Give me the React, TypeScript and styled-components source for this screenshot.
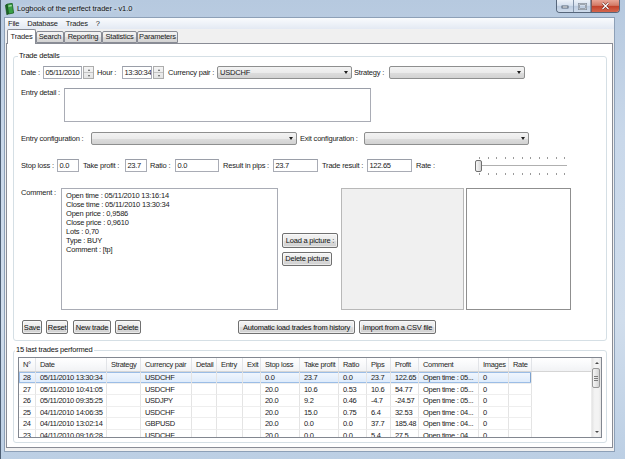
import React from "react";
import styled, { createGlobalStyle } from "styled-components";

const GlobalStyle = createGlobalStyle`
  html, body {
    margin: 0;
    padding: 0;
    width: 625px;
    height: 459px;
    overflow: hidden;
    background: #c6d6e9;
  }
  body {
    font-family: "Liberation Sans", Arial, sans-serif;
    font-size: 7.5px;
    letter-spacing: -0.2px;
    color: #1a1a1a;
  }
  * {
    box-sizing: border-box;
  }
`;

// Window chrome
const Window = styled.div`
  width: 625px;
  height: 459px;
  display: flex;
  flex-direction: column;
  border-left: 1px solid #4e5f74;
  background: linear-gradient(180deg, #b6c9df 0%, #c9d8ea 30%, #d0ddec 70%, #bccfe4 100%);
`;

const TitleBar = styled.div`
  height: 17px;
  flex: none;
  display: flex;
  align-items: flex-start;
  padding: 0 5px 0 3px;
`;

const AppIcon = styled.svg`
  margin-top: 3px;
  flex: none;
`;

const Title = styled.div`
  margin: 4px 0 0 2px;
  line-height: 9px;
  letter-spacing: -0.05px;
  color: #111;
  text-shadow: 0 0 4px rgba(255, 255, 255, 0.9);
`;

const Captions = styled.div`
  margin-left: auto;
  height: 13px;
  display: flex;
  border: 1px solid #56667b;
  border-top: none;
  border-radius: 0 0 4px 4px;
  overflow: hidden;
`;

const CaptionButton = styled.div<{ $w: number; $close?: boolean }>`
  width: ${(p) => p.$w}px;
  display: flex;
  align-items: center;
  justify-content: center;
  border-left: ${(p) => (p.$close ? "1px solid #7a5a5a" : "none")};
  border-right: ${(p) => (p.$close ? "none" : "1px solid #8394aa")};
  background: ${(p) =>
    p.$close
      ? "linear-gradient(180deg, #e8a697 0%, #d37a66 45%, #c2412a 52%, #d4664d 100%)"
      : "linear-gradient(180deg, #edf2f9 0%, #d5e0ee 45%, #bccbdf 52%, #cfdcec 100%)"};
`;

const Client = styled.div`
  flex: 1;
  min-height: 0;
  margin: 0 10px 7px 3px;
  border: 1px solid #8da0b7;
  background: #f0f0f0;
  display: flex;
  flex-direction: column;
`;

// Menu
const MenuBar = styled.div`
  height: 11px;
  flex: none;
  display: flex;
  align-items: center;
  background: linear-gradient(180deg, #f9fbfd 0%, #eef2f8 50%, #e3e9f3 100%);
`;

const MenuItem = styled.span`
  padding: 0 4px;
  line-height: 11px;
  &:first-child {
    margin-left: -1px;
  }
`;

// Tabs
const TabBar = styled.div`
  height: 14px;
  flex: none;
  display: flex;
  align-items: flex-end;
  padding-left: 2px;
  position: relative;
  z-index: 2;
`;

const Tab = styled.div<{ $w: number; $active?: boolean }>`
  width: ${(p) => p.$w}px;
  height: ${(p) => (p.$active ? 15 : 12)}px;
  margin-bottom: ${(p) => (p.$active ? -1 : 0)}px;
  border: 1px solid #898c95;
  border-bottom: ${(p) => (p.$active ? "none" : "1px solid #898c95")};
  border-radius: 2px 2px 0 0;
  background: ${(p) =>
    p.$active ? "#ffffff" : "linear-gradient(180deg, #f3f3f3 0%, #ebebeb 50%, #dedede 52%, #d3d3d3 100%)"};
  text-align: center;
  line-height: ${(p) => (p.$active ? 13 : 10)}px;
  white-space: nowrap;
`;

const TabPane = styled.div`
  flex: 1;
  min-height: 0;
  margin: 0 1px 3px 1px;
  border: 1px solid #898c95;
  background: #ffffff;
  padding: 7px 5px 0 6px;
  display: flex;
  flex-direction: column;
`;

// Group boxes
const Group = styled.fieldset<{ $mt?: number }>`
  margin: ${(p) => p.$mt ?? 0}px 0 0 0;
  padding: 0;
  border: 1px solid #d5dfe5;
  border-radius: 3px;
  min-width: 0;
`;

const Legend = styled.legend<{ $ml: number }>`
  margin-left: ${(p) => p.$ml}px;
  padding: 0 1px;
  height: 10px;
  line-height: 10px;
  color: #111;
`;

const GroupBody = styled.div<{ $pad: string }>`
  display: flex;
  flex-direction: column;
  padding: ${(p) => p.$pad};
`;

const Row = styled.div<{ $h: number; $mt: number; $align?: string }>`
  flex: none;
  display: flex;
  align-items: ${(p) => p.$align ?? "center"};
  height: ${(p) => p.$h}px;
  margin-top: ${(p) => p.$mt}px;
`;

const Label = styled.span<{ $w: number; $ml?: number }>`
  flex: none;
  width: ${(p) => p.$w}px;
  margin-left: ${(p) => p.$ml ?? 0}px;
  line-height: 10px;
  white-space: nowrap;
`;

// Inputs
const TextField = styled.div<{ $w: number; $h?: number }>`
  flex: none;
  width: ${(p) => p.$w}px;
  height: ${(p) => p.$h ?? 13}px;
  border: 1px solid #a9acb5;
  border-top-color: #9a9ea8;
  background: #ffffff;
  padding-left: 1.5px;
  line-height: 11px;
  letter-spacing: -0.3px;
  white-space: nowrap;
  overflow: hidden;
`;

const SpinBox = styled.div`
  flex: none;
  display: flex;
  height: 13px;
  gap: 1px;
`;

const Spinner = styled.div`
  width: 11px;
  height: 13px;
  border: 1px solid #acacac;
  display: flex;
  flex-direction: column;
  background: linear-gradient(180deg, #f5f5f5 0%, #e4e4e4 100%);
`;

const SpinHalf = styled.div<{ $down?: boolean }>`
  flex: 1;
  display: flex;
  align-items: center;
  justify-content: center;
  border-top: ${(p) => (p.$down ? "1px solid #c4c4c4" : "none")};
`;

const Triangle = styled.span<{ $down?: boolean; $size?: number; $color?: string }>`
  width: 0;
  height: 0;
  border-left: ${(p) => p.$size ?? 2}px solid transparent;
  border-right: ${(p) => p.$size ?? 2}px solid transparent;
  ${(p) =>
    p.$down
      ? `border-top: ${(p.$size ?? 2) + 0.5}px solid ${p.$color ?? "#5a5a5a"};`
      : `border-bottom: ${(p.$size ?? 2) + 0.5}px solid ${p.$color ?? "#5a5a5a"};`}
`;

const Combo = styled.div<{ $w: number; $ml?: number }>`
  flex: none;
  width: ${(p) => p.$w}px;
  height: 13px;
  border: 1px solid #8e8f8f;
  border-radius: 2px;
  background: linear-gradient(180deg, #f3f3f3 0%, #ebebeb 50%, #dddddd 52%, #d2d2d2 100%);
  display: flex;
  align-items: center;
  justify-content: space-between;
  padding: 0 3px 0 2px;
  line-height: 11px;
`;

// Slider
const Slider = styled.div`
  flex: none;
  width: 92px;
  height: 19px;
  margin: -3px 0;
  display: flex;
  flex-direction: column;
`;

const Ticks = styled.div<{ $mt: number }>`
  height: 2px;
  margin-top: ${(p) => p.$mt}px;
  display: flex;
  justify-content: space-between;
  padding: 0 2px 0 4px;
`;

const Tick = styled.span`
  width: 1px;
  height: 2px;
  background: #9a9a9a;
`;

const Track = styled.div`
  height: 12px;
  margin-top: 1px;
  display: flex;
  align-items: center;
  background: linear-gradient(
    180deg,
    transparent 5px,
    #b0b0b0 5px,
    #b0b0b0 6px,
    #ffffff 6px,
    #ffffff 7px,
    transparent 7px
  );
`;

const Handle = styled.div`
  width: 7px;
  height: 12px;
  border: 1px solid #707070;
  border-radius: 2px;
  background: linear-gradient(90deg, #f6f6f6 0%, #e6e6e6 50%, #d4d4d4 100%);
`;

// Comment and pictures
const CommentBox = styled.div`
  flex: none;
  width: 217px;
  height: 122px;
  border: 1px solid #a9acb5;
  background: #ffffff;
  padding: 2px 4px;
  line-height: 9px;
  white-space: pre;
`;

const PictureButtons = styled.div`
  flex: none;
  width: 59px;
  height: 122px;
  margin-left: 4px;
  display: flex;
  flex-direction: column;
  justify-content: center;
  align-items: flex-start;
  gap: 4px;
`;

const ImageBox = styled.div<{ $w: number; $ml?: number; $white?: boolean }>`
  flex: none;
  width: ${(p) => p.$w}px;
  height: 122px;
  margin-left: ${(p) => p.$ml ?? 0}px;
  border: 1px solid ${(p) => (p.$white ? "#8f8f8f" : "#b8b8b8")};
  background: ${(p) => (p.$white ? "#ffffff" : "#f0f0f0")};
`;

const Button = styled.button<{ $w: number; $h?: number; $ml?: number }>`
  flex: none;
  width: ${(p) => p.$w}px;
  height: ${(p) => p.$h ?? 14}px;
  margin: 0 0 0 ${(p) => p.$ml ?? 0}px;
  padding: 0;
  border: 1px solid #707070;
  border-radius: 2px;
  background: linear-gradient(180deg, #f3f3f3 0%, #ebebeb 50%, #dddddd 52%, #cfcfcf 100%);
  box-shadow: inset 0 0 0 1px rgba(255, 255, 255, 0.55);
  font: inherit;
  letter-spacing: inherit;
  color: #111;
  line-height: 11px;
  white-space: nowrap;
  display: flex;
  align-items: center;
  justify-content: center;
`;

// Table
const COLS = "17px 71px 34px 51px 25px 26px 18px 39px 39px 28px 24px 28px 60px 30px 23px 1fr";

const TableFrame = styled.div`
  flex: none;
  width: 584px;
  height: 81px;
  border: 1px solid #828790;
  background: #ffffff;
  display: flex;
  letter-spacing: -0.3px;
`;

const TableArea = styled.div`
  flex: 1;
  min-width: 0;
  overflow: hidden;
`;

const HeaderRow = styled.div`
  display: grid;
  grid-template-columns: ${COLS};
  height: 14px;
  border-bottom: 1px solid #d5d5d5;
  background: linear-gradient(180deg, #ffffff 0%, #f7f8fa 60%, #f1f2f4 100%);
`;

const HeaderCell = styled.div<{ $filler?: boolean }>`
  padding-left: 4px;
  line-height: 13px;
  white-space: nowrap;
  overflow: hidden;
  color: #262626;
  border-right: ${(p) => (p.$filler ? "none" : "1px solid #e2e4e8")};
`;

const DataRow = styled.div`
  display: grid;
  grid-template-columns: ${COLS};
  height: 11.6px;
`;

const Cell = styled.div<{ $sel?: boolean; $first?: boolean; $last?: boolean; $filler?: boolean }>`
  padding-left: 4px;
  line-height: 11px;
  white-space: nowrap;
  overflow: hidden;
  border-right: ${(p) => (p.$filler ? "none" : "1px solid #e4e4e4")};
  border-bottom: ${(p) => (p.$filler ? "none" : "1px solid #eeeeee")};
  background: ${(p) => (p.$sel ? "linear-gradient(180deg, #f2f7fe 0%, #dceafb 100%)" : "transparent")};
  box-shadow: ${(p) =>
    p.$sel
      ? `inset 0 1px #9bbde6, inset 0 -1px #9bbde6${p.$first ? ", inset 1px 0 #9bbde6" : ""}${
          p.$last ? ", inset -1px 0 #7da2ce" : ""
        }`
      : "none"};
`;

const ScrollBar = styled.div`
  flex: none;
  width: 10px;
  display: flex;
  flex-direction: column;
  border-left: 1px solid #ececec;
  background: linear-gradient(90deg, #e4e4e4 0%, #f3f3f3 30%, #f3f3f3 70%, #e6e6e6 100%);
`;

const ScrollButton = styled.div`
  height: 10px;
  flex: none;
  display: flex;
  align-items: center;
  justify-content: center;
`;

const Thumb = styled.div`
  height: 20px;
  flex: none;
  margin: 0 1px 0 0;
  border: 1px solid #989898;
  border-radius: 2px;
  background: linear-gradient(90deg, #f4f4f4 0%, #e6e6e6 50%, #d3d3d3 100%);
  display: flex;
  flex-direction: column;
  align-items: center;
  justify-content: center;
  gap: 1px;
`;

const Grip = styled.span`
  width: 4px;
  height: 1px;
  background: #7c7c7c;
`;

const ScrollSpace = styled.div`
  flex: 1;
`;

const tabs = [
  { label: "Trades", w: 29, active: true },
  { label: "Search", w: 28 },
  { label: "Reporting", w: 38 },
  { label: "Statistics", w: 35 },
  { label: "Parameters", w: 41 },
];

const headers = [
  "N°",
  "Date",
  "Strategy",
  "Currency pair",
  "Detail",
  "Entry",
  "Exit",
  "Stop loss",
  "Take profit",
  "Ratio",
  "Pips",
  "Profit",
  "Comment",
  "Images",
  "Rate",
];

const trades = [
  ["28", "05/11/2010 13:30:34", "", "USDCHF", "", "", "", "0.0", "23.7", "0.0", "23.7", "122.65", "Open time : 05...", "0", ""],
  ["27", "05/11/2010 10:41:05", "", "USDCHF", "", "", "", "20.0", "10.6", "0.53", "10.6", "54.77", "Open time : 05...", "0", ""],
  ["26", "05/11/2010 09:35:25", "", "USDJPY", "", "", "", "20.0", "9.2", "0.46", "-4.7", "-24.57", "Open time : 05...", "0", ""],
  ["25", "04/11/2010 14:06:35", "", "USDCHF", "", "", "", "20.0", "15.0", "0.75", "6.4", "32.53", "Open time : 04...", "0", ""],
  ["24", "04/11/2010 13:02:14", "", "GBPUSD", "", "", "", "20.0", "0.0", "0.0", "37.7", "185.48", "Open time : 04...", "0", ""],
  ["23", "04/11/2010 09:16:28", "", "USDCHF", "", "", "", "20.0", "0.0", "0.0", "5.4", "27.5", "Open time : 04...", "0", ""],
];

const comment = `Open time : 05/11/2010 13:16:14
Close time : 05/11/2010 13:30:34
Open price : 0,9586
Close price : 0,9610
Lots : 0,70
Type : BUY
Comment : [tp]`;

const SpinButtons = () => (
  <Spinner>
    <SpinHalf>
      <Triangle $size={1.5} />
    </SpinHalf>
    <SpinHalf $down>
      <Triangle $down $size={1.5} />
    </SpinHalf>
  </Spinner>
);

const ComboArrow = () => <Triangle $down $size={2.5} $color="#1e1e1e" />;

export default function App() {
  return (
    <>
      <GlobalStyle />
      <Window>
        <TitleBar>
          <AppIcon width="11" height="12" viewBox="0 0 11 12">
            <path d="M3 1.2 L8.2 0.3 L9.6 10 L4.4 11 Z" fill="#3aa046" stroke="#185e20" strokeWidth="0.8" />
            <path d="M1.4 2.2 L3 1.2 L4.4 11 L2.8 11.8 Z" fill="#1e6b27" stroke="#134a19" strokeWidth="0.6" />
            <path d="M4.3 2.6 L7.6 2 L7.8 3.2 L4.5 3.8 Z" fill="#b9e3b8" />
          </AppIcon>
          <Title>Logbook of the perfect trader - v1.0</Title>
          <Captions>
            <CaptionButton $w={17}>
              <svg width="8" height="6" viewBox="0 0 8 6">
                <rect x="1" y="3" width="6" height="2" fill="#fff" stroke="#3b4a5e" strokeWidth="0.8" />
              </svg>
            </CaptionButton>
            <CaptionButton $w={17}>
              <svg width="9" height="7" viewBox="0 0 9 7">
                <rect x="1" y="1" width="7" height="5" fill="none" stroke="#3b4a5e" strokeWidth="1.6" />
                <rect x="1" y="1" width="7" height="5" fill="none" stroke="#fff" strokeWidth="0.8" />
              </svg>
            </CaptionButton>
            <CaptionButton $w={28} $close>
              <svg width="9" height="8" viewBox="0 0 9 8">
                <path d="M1.5 1 L7.5 7 M7.5 1 L1.5 7" stroke="#5a1a12" strokeWidth="2.4" />
                <path d="M1.5 1 L7.5 7 M7.5 1 L1.5 7" stroke="#fff" strokeWidth="1.3" />
              </svg>
            </CaptionButton>
          </Captions>
        </TitleBar>

        <Client>
          <MenuBar>
            {["File", "Database", "Trades", "?"].map((m) => (
              <MenuItem key={m}>{m}</MenuItem>
            ))}
          </MenuBar>

          <TabBar>
            {tabs.map((t) => (
              <Tab key={t.label} $w={t.w} $active={t.active}>
                {t.label}
              </Tab>
            ))}
          </TabBar>

          <TabPane>
            <Group>
              <Legend $ml={4}>Trade details</Legend>
              <GroupBody $pad="0 0 6px 7px">
                <Row $h={13} $mt={5}>
                  <Label $w={22}>Date :</Label>
                  <SpinBox>
                    <TextField $w={39}>05/11/2010</TextField>
                    <SpinButtons />
                  </SpinBox>
                  <Label $w={25} $ml={3}>
                    Hour :
                  </Label>
                  <SpinBox>
                    <TextField $w={30}>13:30:34</TextField>
                    <SpinButtons />
                  </SpinBox>
                  <Label $w={49} $ml={4}>
                    Currency pair :
                  </Label>
                  <Combo $w={135}>
                    USDCHF
                    <ComboArrow />
                  </Combo>
                  <Label $w={35} $ml={2}>
                    Strategy :
                  </Label>
                  <Combo $w={136}>
                    <span />
                    <ComboArrow />
                  </Combo>
                </Row>

                <Row $h={34} $mt={9} $align="flex-start">
                  <Label $w={43}>Entry detail :</Label>
                  <TextField $w={307} $h={34} />
                </Row>

                <Row $h={13} $mt={10}>
                  <Label $w={70}>Entry configuration :</Label>
                  <Combo $w={206}>
                    <span />
                    <ComboArrow />
                  </Combo>
                  <Label $w={64} $ml={3}>
                    Exit configuration :
                  </Label>
                  <Combo $w={165}>
                    <span />
                    <ComboArrow />
                  </Combo>
                </Row>

                <Row $h={13} $mt={14}>
                  <Label $w={36}>Stop loss :</Label>
                  <TextField $w={22}>0.0</TextField>
                  <Label $w={42} $ml={4}>
                    Take profit :
                  </Label>
                  <TextField $w={22}>23.7</TextField>
                  <Label $w={25} $ml={3}>
                    Ratio :
                  </Label>
                  <TextField $w={44}>0.0</TextField>
                  <Label $w={50} $ml={4}>
                    Result in pips :
                  </Label>
                  <TextField $w={45}>23.7</TextField>
                  <Label $w={45} $ml={4}>
                    Trade result :
                  </Label>
                  <TextField $w={45}>122.65</TextField>
                  <Label $w={59} $ml={4}>
                    Rate :
                  </Label>
                  <Slider>
                    <Ticks $mt={1}>
                      {Array.from({ length: 11 }, (_, i) => (
                        <Tick key={i} />
                      ))}
                    </Ticks>
                    <Track>
                      <Handle />
                    </Track>
                    <Ticks $mt={1}>
                      {Array.from({ length: 11 }, (_, i) => (
                        <Tick key={i} />
                      ))}
                    </Ticks>
                  </Slider>
                </Row>

                <Row $h={122} $mt={16} $align="flex-start">
                  <Label $w={40}>Comment :</Label>
                  <CommentBox>{comment}</CommentBox>
                  <PictureButtons>
                    <Button $w={56} $h={15}>
                      Load a picture :
                    </Button>
                    <Button $w={50}>Delete picture</Button>
                  </PictureButtons>
                  <ImageBox $w={123} />
                  <ImageBox $w={105} $ml={2} $white />
                </Row>

                <Row $h={14} $mt={10}>
                  <Button $w={20} $ml={1}>
                    Save
                  </Button>
                  <Button $w={22} $ml={4}>
                    Reset
                  </Button>
                  <Button $w={38} $ml={5}>
                    New trade
                  </Button>
                  <Button $w={26} $ml={4}>
                    Delete
                  </Button>
                  <Button $w={117} $ml={97}>
                    Automatic load trades from history
                  </Button>
                  <Button $w={77} $ml={4}>
                    Import from a CSV file
                  </Button>
                </Row>
              </GroupBody>
            </Group>

            <Group $mt={4}>
              <Legend $ml={1}>15 last trades performed</Legend>
              <GroupBody $pad="2px 4px 4px 4px">
                <TableFrame>
                  <TableArea>
                    <HeaderRow>
                      {headers.map((h) => (
                        <HeaderCell key={h}>{h}</HeaderCell>
                      ))}
                      <HeaderCell $filler />
                    </HeaderRow>
                    {trades.map((row, r) => (
                      <DataRow key={row[0]}>
                        {row.map((v, c) => (
                          <Cell key={c} $sel={r === 0} $first={c === 0} $last={c === row.length - 1}>
                            {v}
                          </Cell>
                        ))}
                        <Cell $filler />
                      </DataRow>
                    ))}
                  </TableArea>
                  <ScrollBar>
                    <ScrollButton>
                      <Triangle $size={2} $color="#4a4a4a" />
                    </ScrollButton>
                    <Thumb>
                      <Grip />
                      <Grip />
                      <Grip />
                    </Thumb>
                    <ScrollSpace />
                    <ScrollButton>
                      <Triangle $down $size={2} $color="#4a4a4a" />
                    </ScrollButton>
                  </ScrollBar>
                </TableFrame>
              </GroupBody>
            </Group>
          </TabPane>
        </Client>
      </Window>
    </>
  );
}
